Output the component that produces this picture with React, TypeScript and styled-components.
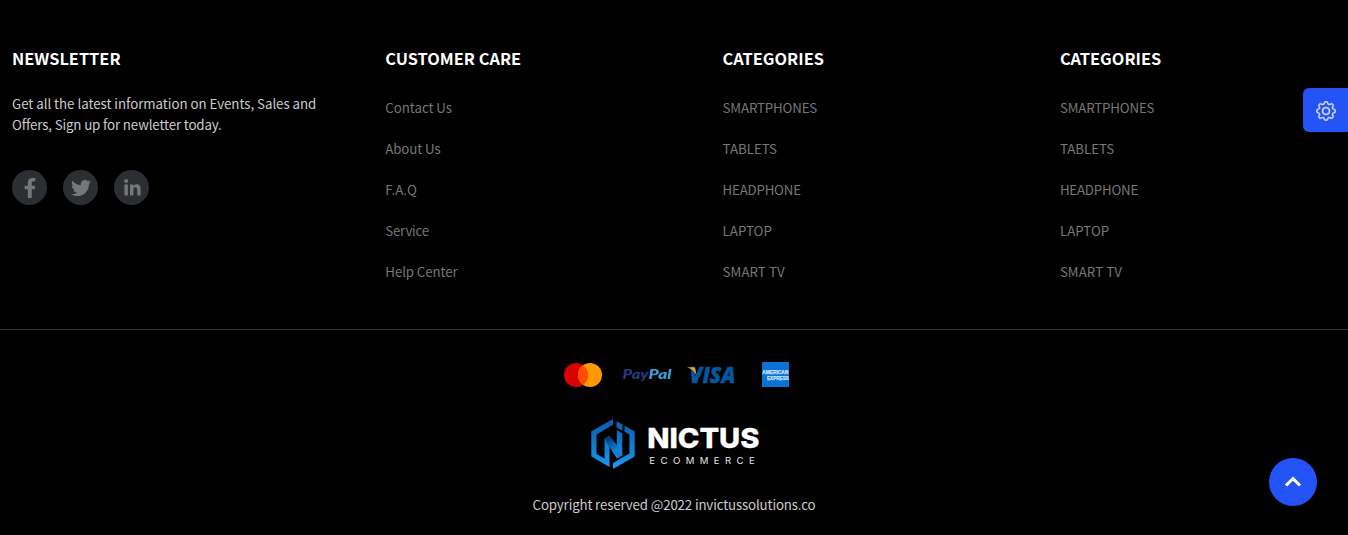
import React from "react";
import styled, { createGlobalStyle } from "styled-components";
import { FaFacebookF, FaLinkedinIn, FaTwitter } from "react-icons/fa";
import { BsGear } from "react-icons/bs";

const GlobalStyle = createGlobalStyle`
  *, *::before, *::after { box-sizing: border-box; }
  body {
    margin: 0;
    background: #000;
    color: #ccc;
    font-family: "Noto Sans CJK SC", "Noto Sans", sans-serif;
    font-size: 13.3px;
    overflow: hidden;
  }
`;

const Footer = styled.footer`
  display: flex;
  flex-direction: column;
  height: 535px;
  background: #000;
`;

const Columns = styled.div`
  display: grid;
  grid-template-columns: 373.3px 337.3px 337.3px 1fr;
  height: 330px;
  padding: 47px 0 0 12px;
  border-bottom: 1px solid #343434;
`;

const Column = styled.section`
  display: flex;
  flex-direction: column;
`;

const Heading = styled.h2`
  margin: 0;
  color: #fff;
  font-size: 16.35px;
  font-weight: 700;
  line-height: 22px;
  white-space: nowrap;
`;

const Blurb = styled.p`
  display: flex;
  flex-direction: column;
  margin: 24px 0 35px;
`;

const Line = styled.span<{ $tracking?: number }>`
  line-height: 21px;
  letter-spacing: ${({ $tracking = 0 }) => $tracking}px;
  white-space: nowrap;
`;

const LinkList = styled.ul`
  display: flex;
  flex-direction: column;
  gap: 20px;
  margin: 28px 0 0;
  padding: 0;
  list-style: none;
`;

const FooterLink = styled.a<{ $tracking?: number }>`
  display: block;
  color: #777;
  line-height: 21px;
  letter-spacing: ${({ $tracking = 0 }) => $tracking}px;
  white-space: nowrap;
`;

const Socials = styled.div`
  display: flex;
  gap: 16px;
`;

const SocialButton = styled.a<{ $size?: number; $inset?: string }>`
  display: flex;
  align-items: center;
  justify-content: center;
  width: 35px;
  height: 35px;
  padding: ${({ $inset = "0" }) => $inset};
  border-radius: 50%;
  background: #2b2e33;
  color: #777;
  font-size: ${({ $size = 20 }) => $size}px;
`;

const Bottom = styled.div`
  display: flex;
  flex-direction: column;
  align-items: center;
  padding-top: 28px;
`;

const Payments = styled.div`
  display: flex;
  width: 240px;
  height: 34px;
  margin-left: 4px;
`;

const Brand = styled.div`
  display: flex;
  height: 56px;
  width: 180px;
  margin: 24px 0 22px 2px;
`;

const SettingsTab = styled.button`
  position: fixed;
  top: 88px;
  right: 0;
  display: flex;
  align-items: center;
  justify-content: center;
  width: 45px;
  height: 44px;
  padding: 2px 0 0;
  border: 0;
  border-radius: 6px 0 0 6px;
  background: #2453f5;
  color: #d3dcfd;
  font-size: 20px;

  svg {
    stroke: currentColor;
    stroke-width: 0.3;
  }
`;

const ScrollTop = styled.button`
  position: fixed;
  right: 31px;
  bottom: 29px;
  display: flex;
  align-items: center;
  justify-content: center;
  width: 48px;
  height: 48px;
  padding: 0;
  border: 0;
  border-radius: 50%;
  background: #2453f5;
`;

type Item = { label: string; tracking?: number };

const customerCare: Item[] = [
  { label: "Contact Us", tracking: -0.05 },
  { label: "About Us", tracking: -0.12 },
  { label: "F.A.Q" },
  { label: "Service", tracking: -0.25 },
  { label: "Help Center", tracking: -0.1 },
];

const categories: Item[] = [
  { label: "SMARTPHONES", tracking: -0.17 },
  { label: "TABLETS", tracking: -0.03 },
  { label: "HEADPHONE", tracking: -0.22 },
  { label: "LAPTOP" },
  { label: "SMART TV", tracking: 0.05 },
];

function LinkColumn({ title, items }: { title: string; items: Item[] }) {
  return (
    <Column>
      <Heading>{title}</Heading>
      <LinkList>
        {items.map(({ label, tracking }) => (
          <li key={label}>
            <FooterLink $tracking={tracking}>{label}</FooterLink>
          </li>
        ))}
      </LinkList>
    </Column>
  );
}

function PaymentLogos() {
  return (
    <svg width="240" height="34" viewBox="556 358 240 34">
      <circle cx="576" cy="375" r="12" fill="#d80000" />
      <circle cx="590" cy="375" r="12" fill="#ff9a00" />
      <path d="M583 365.2a12 12 0 0 1 0 19.6a12 12 0 0 1 0-19.6z" fill="#ff4c00" />
      <g fontFamily="Lato, sans-serif" fontWeight="900" fontStyle="italic" fontSize="14">
        <text x="622.5" y="379" textLength="26" lengthAdjust="spacingAndGlyphs" fill="#253b80">Pay</text>
        <text x="648.5" y="379" textLength="23" lengthAdjust="spacingAndGlyphs" fill="#3f9fdc">Pal</text>
      </g>
      <text x="689.5" y="383" textLength="46" lengthAdjust="spacingAndGlyphs" fontFamily="Open Sans, sans-serif" fontWeight="800" fontStyle="italic" fontSize="22" fill="#0058a0" stroke="#0058a0" strokeWidth="0.4">VISA</text>
      <path d="M687 367.200h6.200c1.200 0 1.800.5 2 1.600l1.400 6.700c-1.600-3.800-4.700-6.700-9.600-8.300z" fill="#f9a01b" />
      <rect x="762" y="362" width="27" height="25" fill="#0b72d5" />
      <g fontFamily="Liberation Sans, sans-serif" fontWeight="700" fontSize="6" fill="#d4e7fa" stroke="#d4e7fa" strokeWidth="0.25">
        <text x="762.2" y="374" textLength="26" lengthAdjust="spacingAndGlyphs">AMERICAN</text>
        <text x="767" y="380.200" textLength="21.800" lengthAdjust="spacingAndGlyphs">EXPRESS</text>
      </g>
    </svg>
  );
}

function NictusLogo() {
  return (
    <svg width="180" height="56" viewBox="585 416 180 56">
      <defs>
        <linearGradient id="hex" x1="0" y1="418" x2="0" y2="469" gradientUnits="userSpaceOnUse">
          <stop offset="0" stopColor="#0a5aa8" />
          <stop offset="0.5" stopColor="#0f78cc" />
          <stop offset="1" stopColor="#1a9bf2" />
        </linearGradient>
        <linearGradient id="fold" x1="605" y1="442" x2="613" y2="452" gradientUnits="userSpaceOnUse">
          <stop offset="0" stopColor="#06407c" />
          <stop offset="1" stopColor="#127fd4" />
        </linearGradient>
      </defs>
      <g fill="url(#hex)">
        <path d="M613 419v5.800l-16.500 9.600v19.600l8 4.600v-19.600l5-3.200v31.300L591.300 456.500v-25.200z" />
        <path d="M616.500 421l6 3.500v6.300l-6-3.500z" />
        <path d="M624.500 425.400l10.200 6v25L613 469v-6l16.400-9.500v-18.900l-4.900-2.800z" />
        <path d="M616.800 430l5.500 3.200v22l-5.500 3.200z" />
      </g>
      <path d="M604.500 439l5-3.200L622.300 452v3.200l-5.500 3.200z" fill="url(#fold)" />
      <text x="647.2" y="448" textLength="112.300" lengthAdjust="spacingAndGlyphs" fontFamily="Inter, sans-serif" fontWeight="800" fontSize="27.5" fill="#fff" stroke="#fff" strokeWidth="0.3">NICTUS</text>
      <text x="649.3" y="463.500" textLength="105.500" fontFamily="Inter, sans-serif" fontSize="9.6" fill="#e4e4e4">ECOMMERCE</text>
    </svg>
  );
}

export default function App() {
  return (
    <>
      <GlobalStyle />
      <Footer>
        <Columns>
          <Column>
            <Heading>NEWSLETTER</Heading>
            <Blurb>
              <Line $tracking={-0.035}>Get all the latest information on Events, Sales and</Line>
              <Line $tracking={-0.135}>Offers, Sign up for newletter today.</Line>
            </Blurb>
            <Socials>
              <SocialButton><FaFacebookF /></SocialButton>
              <SocialButton><FaTwitter /></SocialButton>
              <SocialButton $size={18.8} $inset="1px 0 0 1px"><FaLinkedinIn /></SocialButton>
            </Socials>
          </Column>
          <LinkColumn title="CUSTOMER CARE" items={customerCare} />
          <LinkColumn title="CATEGORIES" items={categories} />
          <LinkColumn title="CATEGORIES" items={categories} />
        </Columns>
        <Bottom>
          <Payments><PaymentLogos /></Payments>
          <Brand><NictusLogo /></Brand>
          <Line $tracking={-0.15}>Copyright reserved @2022 invictussolutions.co</Line>
        </Bottom>
      </Footer>
      <SettingsTab aria-label="Settings"><BsGear /></SettingsTab>
      <ScrollTop aria-label="Back to top">
        <svg width="18" height="12" viewBox="0 0 18 12" fill="none" stroke="#fff" strokeWidth="3">
          <path d="M2 9.500L9 2.700l7 6.800" />
        </svg>
      </ScrollTop>
    </>
  );
}
